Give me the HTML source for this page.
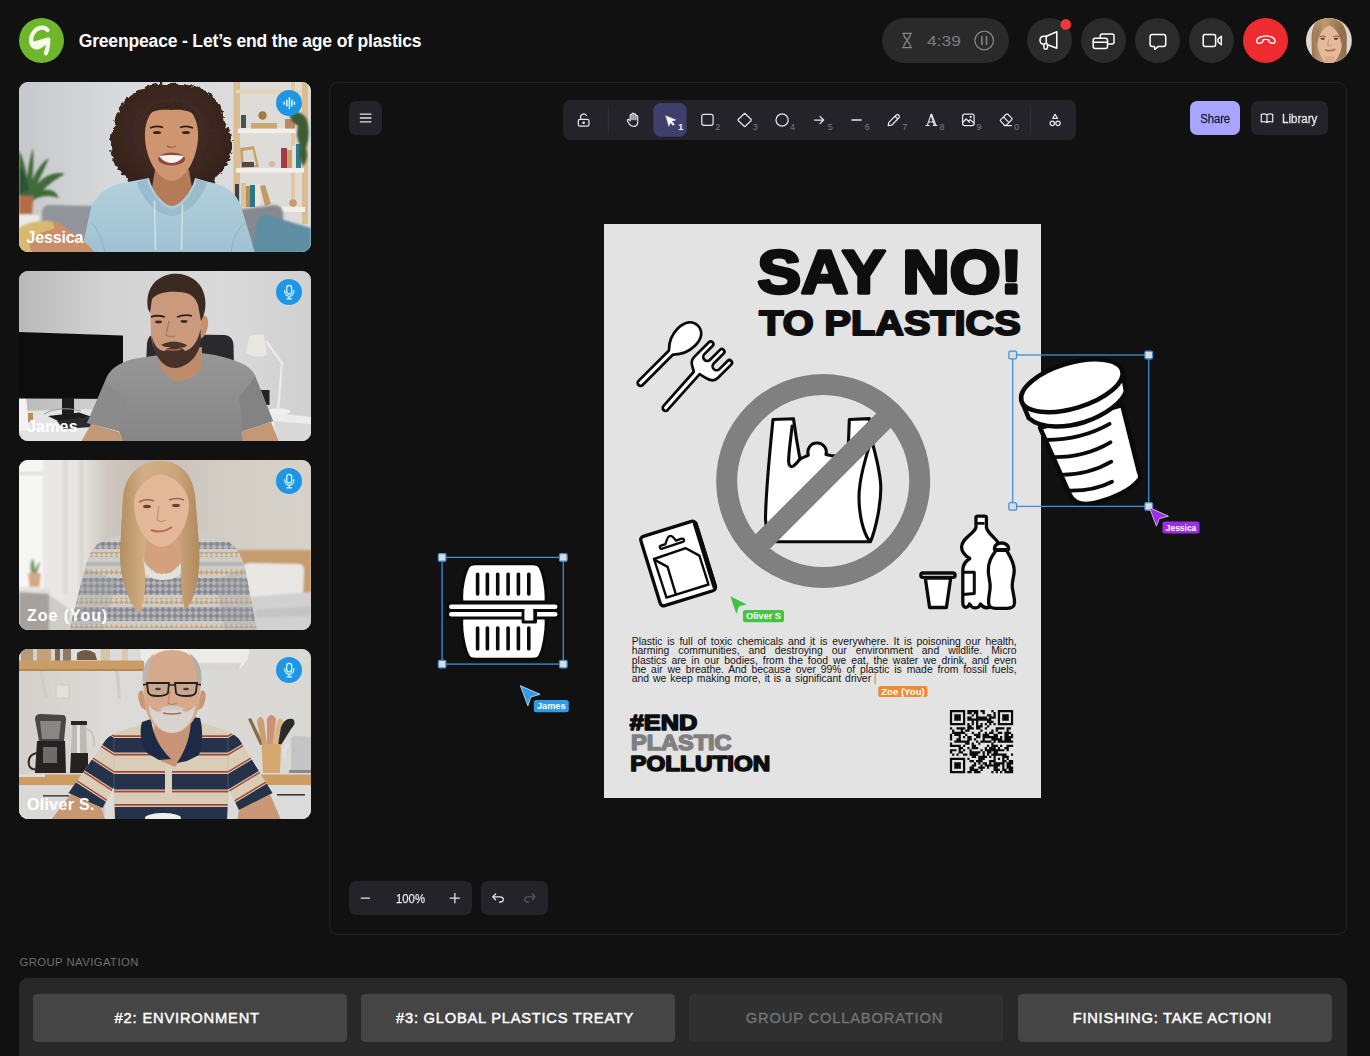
<!DOCTYPE html>
<html lang="en">
<head>
<meta charset="utf-8">
<title>Greenpeace - Let's end the age of plastics</title>
<style>
*{box-sizing:border-box;margin:0;padding:0}
html,body{width:1370px;height:1056px;overflow:hidden;background:#111111;font-family:"Liberation Sans",sans-serif;color:#fff}
.abs{position:absolute}
#root{position:relative;width:1370px;height:1056px;overflow:hidden;background:#111111}
/* header */
#logo{left:19px;top:18px;width:45px;height:45px;border-radius:50%;background:#6fb62c}
#title{left:78.700px;top:28.600px;font-weight:bold;font-size:17.500px;line-height:24px;white-space:nowrap;letter-spacing:-0.160px}
.cbtn{top:18px;width:45px;height:45px;border-radius:50%;background:#2b2b2b}
#timer{left:882px;top:18px;width:126.5px;height:45px;border-radius:23px;background:#2a2a2a}
/* tiles */
.tile{left:19px;width:291.5px;height:170.5px;border-radius:9px;overflow:hidden;background:#ccc}
.tile svg.ph{position:absolute;left:0;top:0;width:100%;height:100%;display:block}
.tile .nm{position:absolute;left:8px;bottom:5px;font-weight:bold;font-size:16px;color:#fff;letter-spacing:.2px}
.tile .mic{position:absolute;left:256.8px;top:8.2px;width:26.4px;height:26.4px;border-radius:50%;background:#1e96e6}
.tile .mic svg{display:block}
/* canvas */
#canvas{left:329px;top:81.5px;width:1018px;height:853px;border:1.3px solid #242424;border-radius:9px;background:#111111}
.ex{background:#232329;border-radius:7px}
#poster{left:604px;top:224px;width:437px;height:574px;background:#e3e3e3}
.jl{white-space:nowrap;text-align:justify;text-align-last:justify;height:9.3px}
/* bottom */
#gnl{left:19px;top:955px;font-size:11.5px;color:#6c6c6c;letter-spacing:.3px}
#gnp{left:18.800px;top:978px;width:1328.400px;height:90px;border-radius:8.500px;background:#282828}
.gb{top:994px;width:314px;height:48px;border-radius:4.500px;background:#454545;color:#fff;font-weight:bold;font-size:15px;text-align:center;line-height:48px;letter-spacing:.5px}
</style>
</head>
<body>
<div id="root">
<!-- HEADER -->
<div id="logo" class="abs"></div>
<div id="title" class="abs">Greenpeace - Let’s end the age of plastics</div>
<div id="timer" class="abs"></div>
<div class="abs cbtn" style="left:1027px"></div>
<div class="abs cbtn" style="left:1081px"></div>
<div class="abs cbtn" style="left:1135px"></div>
<div class="abs cbtn" style="left:1189px"></div>
<div class="abs cbtn" style="left:1243px;background:#ee2b2e"></div>
<div class="abs cbtn" id="avatar" style="left:1306.400px;top:17.700px;width:45.300px;height:45.300px;background:#c9a98c;overflow:hidden"><svg viewBox="0 0 45 45" width="45.300" height="45.300" style="display:block"><defs><clipPath id="avc"><circle cx="22.500" cy="22.500" r="22.500"/></clipPath><filter id="avb" x="-10%" y="-10%" width="120%" height="120%"><feGaussianBlur stdDeviation=".6"/></filter><linearGradient id="avh" x1="0" x2="1"><stop offset="0" stop-color="#9a7652"/><stop offset=".3" stop-color="#c19a70"/><stop offset=".55" stop-color="#b08a60"/><stop offset="1" stop-color="#8d6a49"/></linearGradient></defs><g clip-path="url(#avc)"><rect width="45" height="45" fill="#dcd8d2"/><g filter="url(#avb)"><path d="M22 0 C10 0 5.500 8 5.500 20 L6 46 L40 46 L40.500 20 C40.500 8 34 0 22 0Z" fill="url(#avh)"/><path d="M23.500 7 C15 7 10.500 13 10.800 22 C11 31 15 40 19 44 L23 46 L28 44 C32 40 36 31 36.200 22 C36.500 13 32 7 23.500 7Z" fill="#e4ba9a"/><path d="M19 46 L19 38 L28 38 L28 46Z" fill="#d9ab88"/><path d="M21 0.500 C14 3 9.500 10 10 20 L10.500 30 C12 20 14 12 23 7.500 C30 10 34.500 18 36 30 L36.500 20 C37 10 32 2.500 24 0.500Z" fill="url(#avh)"/><path d="M13.500 18.800 Q16.500 17.300 19.500 18.600 M27 18.500 Q30 17.200 33 18.600" stroke="#7a5a3e" stroke-width="1" fill="none"/><ellipse cx="16.600" cy="20.700" rx="2.200" ry="1" fill="#4f3c2f"/><ellipse cx="29.800" cy="20.600" rx="2.200" ry="1" fill="#4f3c2f"/><path d="M22.500 21 L21.500 27 Q23.500 28.300 25.500 27" stroke="#c4906f" stroke-width=".9" fill="none"/><path d="M19 31.500 Q24 34 29 30.800" stroke="#b4695c" stroke-width="1.500" fill="none"/></g></g></svg></div>
<svg class="abs" style="left:0;top:0" width="1370" height="80" viewBox="0 0 1370 80" fill="none" stroke-linecap="round" stroke-linejoin="round">
<!-- logo G -->
<path d="M47.400 30 C44 25.800 36.800 27.200 33.200 33 C29.400 39.300 30.800 46.600 36 47.300 C40 47.800 43.800 44 46.500 40.300 M34.800 43.300 C38.800 42.500 44 40.800 48.300 39.500 C48.200 44 47.500 49.300 45.900 53.300" stroke="#f6fcec" stroke-width="4.200"/>
<!-- timer -->
<g stroke="#858585" stroke-width="1.300">
<path d="M902.600 33.300 H911.600 M902.600 47.600 H911.600 M903.600 33.300 C903.600 38.500 907.100 39 907.100 40.400 C907.100 41.800 903.600 42.500 903.600 47.600 M910.600 33.300 C910.600 38.500 907.100 39 907.100 40.400 C907.100 41.800 910.600 42.500 910.600 47.600"/>
<circle cx="984.200" cy="40.500" r="9.300"/>
<path d="M981.900 36.500 V44.500 M986.500 36.500 V44.500" stroke-width="1.600"/>
</g>
<!-- megaphone -->
<g stroke="#fff" stroke-width="1.500">
<path d="M1046.300 36.300 L1056.800 31.800 V48.300 L1046.300 44.200 H1044 C1041.500 44.200 1040 42.500 1040 40.200 C1040 38 1041.500 36.300 1044 36.300Z"/>
<path d="M1046.300 36.300 V44.200"/>
<rect x="1043.900" y="43.500" width="3.600" height="5.800" rx="1.700" fill="#2a2a2a"/>
</g>
<circle cx="1065.800" cy="24.400" r="5.300" fill="#f23838"/>
<!-- cards -->
<g stroke="#fff" stroke-width="1.500">
<path d="M1100.300 37.500 V36 C1100.300 34.800 1101.200 34 1102.300 34 H1112 C1113.200 34 1114 34.800 1114 36 V42.100 C1114 43.300 1113.200 44.100 1112 44.100 H1108.500"/>
<rect x="1093.200" y="38.300" width="14.300" height="10.300" rx="2"/>
<path d="M1093.200 42.300 H1107.500"/>
</g>
<!-- chat -->
<path d="M1152.300 34.600 H1163.500 C1164.800 34.600 1165.700 35.500 1165.700 36.800 V44.200 C1165.700 45.500 1164.800 46.400 1163.500 46.400 H1158.300 L1154.800 49.300 L1154.300 46.400 H1152.300 C1151 46.400 1150.100 45.500 1150.100 44.200 V36.800 C1150.100 35.500 1151 34.600 1152.300 34.600Z" stroke="#fff" stroke-width="1.500"/>
<!-- video -->
<g stroke="#fff" stroke-width="1.500"><rect x="1203.200" y="34.600" width="12.400" height="11.800" rx="2"/><path d="M1221.300 36.300 L1218 39 V42 L1221.300 44.700Z"/></g>
<!-- phone -->
<path d="M1256.800 41.600 C1256.300 39.500 1257.500 38.300 1259.200 37.500 C1263.200 35.600 1268.600 35.600 1272.600 37.500 C1274.300 38.300 1275.500 39.500 1275 41.600 C1274.700 43 1273.700 43.600 1272.500 43.300 L1270.300 42.700 C1269.300 42.400 1268.800 41.700 1268.800 40.700 V39.900 C1267 39.300 1264.800 39.300 1263 39.900 V40.700 C1263 41.700 1262.500 42.400 1261.500 42.700 L1259.300 43.300 C1258.100 43.600 1257.100 43 1256.800 41.600Z" stroke="#fff" stroke-width="1.400"/>
<text x="927" y="46" font-family="'Liberation Sans',sans-serif" font-size="15.300" fill="#7d7d7d" stroke="none" textLength="33.800" lengthAdjust="spacingAndGlyphs">4:39</text>
</svg>

<!-- TILES -->
<div class="abs tile" id="t1" style="top:81.5px"><svg class="ph" viewBox="0 0 291.5 170.5" preserveAspectRatio="none">
<defs>
<filter id="b1" x="-10%" y="-10%" width="120%" height="120%"><feGaussianBlur stdDeviation="1"/></filter>
<filter id="b2" x="-10%" y="-10%" width="120%" height="120%"><feGaussianBlur stdDeviation="2.2"/></filter>
<filter id="curl" x="-10%" y="-10%" width="120%" height="120%"><feTurbulence type="fractalNoise" baseFrequency="0.22" numOctaves="2" seed="4" result="n"/><feDisplacementMap in="SourceGraphic" in2="n" scale="7" xChannelSelector="R" yChannelSelector="G"/><feGaussianBlur stdDeviation="0.5"/></filter>
<filter id="b05" x="-10%" y="-10%" width="120%" height="120%"><feGaussianBlur stdDeviation="0.5"/></filter>
<linearGradient id="jw" x1="0" x2="1"><stop offset="0" stop-color="#c6c8cb"/><stop offset=".35" stop-color="#d9dadc"/><stop offset="1" stop-color="#dcdcdc"/></linearGradient>
<radialGradient id="jh" cx=".5" cy=".45" r=".6"><stop offset="0" stop-color="#4a3128"/><stop offset="1" stop-color="#33211b"/></radialGradient>
<linearGradient id="jhd" x1="0" x2="0" y1="0" y2="1"><stop offset="0" stop-color="#b3d1de"/><stop offset="1" stop-color="#9fc1d1"/></linearGradient>
</defs>
<rect width="291.5" height="170.5" fill="url(#jw)"/>
<!-- shelf -->
<g filter="url(#b05)">
<rect x="213" y="0" width="78" height="140" fill="#dedcd8"/>
<rect x="214.5" y="0" width="6.5" height="128" fill="#dcbd93"/>
<rect x="283" y="0" width="6" height="142" fill="#dcbd93"/>
<rect x="272" y="0" width="4" height="128" fill="#e3c7a0"/>
<rect x="219" y="46.5" width="66" height="4.6" fill="#f1efec"/>
<rect x="217" y="86" width="68" height="4.6" fill="#f1efec"/>
<rect x="262" y="125" width="24" height="5" fill="#f1efec"/>
<rect x="217" y="8" width="66" height="3.5" fill="#e6d3b5"/>
<!-- books mid shelf -->
<rect x="262" y="66" width="6" height="20" fill="#a43a44"/><rect x="268" y="68" width="5" height="18" fill="#c9a06c"/><rect x="273" y="64" width="4" height="22" fill="#e8e2d6"/><rect x="277" y="62" width="5" height="24" fill="#2b7f95"/>
<!-- frame -->
<path d="M221 66 L235 64 L240 85 L222 86Z" fill="#c9a06c"/><path d="M224 69 L233.5 67.5 L237 83 L224.5 83.5Z" fill="#dcdad6"/>
<rect x="223" y="80" width="12" height="5" fill="#5a4a3a"/>
<!-- top shelf items -->
<rect x="232" y="41" width="26" height="5.5" fill="#c9a774"/><circle cx="243.5" cy="33.5" r="4.2" fill="#a5793f"/><rect x="222" y="33" width="5" height="13" fill="#49524d"/>
<rect x="266" y="37" width="10" height="9.5" fill="#b98a5e"/>
<!-- books lower -->
<rect x="216" y="102" width="4" height="23" fill="#3d3f46"/><rect x="222" y="101" width="5" height="24" fill="#d9c19a"/><rect x="227" y="104" width="4" height="21" fill="#b98f58"/><rect x="231" y="103" width="5" height="22" fill="#2a7488"/><rect x="236" y="102" width="5" height="23" fill="#ece6da"/>
<path d="M241 104 L246 103 L252 122 L246 124Z" fill="#c49a63"/>
<circle cx="274" cy="121" r="3.8" fill="#c99c6e"/><circle cx="253" cy="82" r="3" fill="#d8b7a0"/>
</g>
<!-- plant right -->
<g filter="url(#b1)"><path d="M270 32 Q282 26 288 38 Q292 52 287 66 Q290 78 284 84 Q279 76 281 64 Q276 52 279 44 Q272 40 270 32Z" fill="#3d5a34"/></g>
<!-- plant left -->
<g filter="url(#b1)">
<path d="M0 68 Q6 80 8 96 Q10 78 14 66 Q15 84 13 98 Q22 80 30 76 Q24 90 18 102 Q32 88 46 92 Q34 98 24 108 Q36 106 40 116 Q28 112 18 116 L12 120 L0 120Z" fill="#3f6a3a"/>
<path d="M0 84 Q8 92 10 108 L0 112Z" fill="#2f5530"/>
<path d="M0 114 L14.5 114 L13 132 L0 132Z" fill="#b56c45"/>
<rect x="0" y="133" width="20" height="14" fill="#ecebe9"/>
</g>
<!-- sofa -->
<g filter="url(#b1)">
<path d="M23 131 Q23 123 31 123 L80 124 L80 171 L23 171Z" fill="#8f959b"/>
<path d="M215 128 L255 123 Q263 123 264 131 L266 171 L215 171Z" fill="#858a90"/>
<path d="M238 141 Q240 131 248 133 L292 146 L292 171 L232 171Z" fill="#5e8da2"/>
<path d="M0 146 Q10 138 30 139 Q42 141 44 152 L46 171 L0 171Z" fill="#d8b96f"/>
</g>
<!-- hair -->
<g filter="url(#curl)">
<path d="M152 2 C120 -1 98 18 96 44 C86 60 92 84 106 94 C110 104 120 108 128 102 L134 110 L172 110 L178 104 C186 108 196 104 198 94 C214 82 218 58 206 42 C204 16 184 0 152 2Z" fill="url(#jh)"/>
</g>
<!-- neck -->
<path d="M136 88 L170 88 L174 112 L153 128 L132 112Z" fill="#b57a58" filter="url(#b05)"/>
<!-- hoodie -->
<g filter="url(#b05)">
<path d="M109 100 C92 102 78 110 72 126 L62 171 L236 171 L222 124 C216 108 204 103 190 100 L176 96 C172 112 160 124 153 124 C146 124 134 112 130 96Z" fill="url(#jhd)"/>
<path d="M128 97 C132 114 146 127 153 127 C160 127 174 114 178 97 L188 100 C184 116 170 132 153 134 C136 132 122 116 118 100Z" fill="#9abccd"/>
<path d="M135.500 119 L136.500 168" stroke="#d4e6ee" stroke-width="1.3" fill="none"/><path d="M163.500 122 L162.500 168" stroke="#d4e6ee" stroke-width="1.3" fill="none"/>
<path d="M72 140 Q82 150 86 171" stroke="#8eb2c4" stroke-width="1" fill="none"/><path d="M226 140 Q214 152 212 171" stroke="#8eb2c4" stroke-width="1" fill="none"/>
</g>
<!-- face -->
<g filter="url(#b05)">
<path d="M152.500 22 C134 22 125 36 126 56 C127 76 138 98 152.500 99 C167 98 178 76 179 56 C180 36 171 22 152.500 22Z" fill="#cf9570"/>
<path d="M126 34 C132 20 146 18 152 22 C160 18 174 22 180 36 C172 28 162 27 152 28 C142 27 134 28 126 34Z" fill="#3b261f"/>
<ellipse cx="152.600" cy="77" rx="13.500" ry="6.500" fill="#8d4a3d"/>
<path d="M140 74 Q152.600 72 165 74 Q160 81 152.600 81 Q145 81 140 74Z" fill="#f7f4f0"/>
<path d="M131 46 Q137 43 144 45.500" stroke="#2c1b15" stroke-width="1.600" fill="none"/><path d="M161 45.500 Q168 43 174 46" stroke="#2c1b15" stroke-width="1.600" fill="none"/>
<ellipse cx="138" cy="50.500" rx="4" ry="1.500" fill="#3a241c"/><ellipse cx="167" cy="50.500" rx="4" ry="1.500" fill="#3a241c"/>
<path d="M148 64 Q152.600 67 157 64" stroke="#a8694c" stroke-width="1.500" fill="none"/>
</g>
<!-- hand -->
<g filter="url(#b05)"><path d="M12 158 C16 150 28 150 36 146 C32 140 36 137 42 142 C52 150 66 158 76 171 L14 171 C10 166 10 162 12 158Z" fill="#c98e6a"/></g>
</svg>
<div class="nm" style="letter-spacing:-.15px;left:7.500px">Jessica</div><div class="mic"><svg viewBox="0 0 26.4 26.4" width="26.4" height="26.4" fill="none" stroke="#e2fbff" stroke-width="1.500" stroke-linecap="butt"><path d="M8.100 11.700 V14.700 M10.800 9.800 V16.600 M13.400 7.500 V18.900 M15.900 9.800 V16.600 M18.400 11.700 V14.700"/></svg></div></div>
<div class="abs tile" id="t2" style="top:270.5px"><svg class="ph" viewBox="0 0 291.5 170.5" preserveAspectRatio="none">
<defs>
<linearGradient id="mw" x1="0" x2="1"><stop offset="0" stop-color="#b9b9b9"/><stop offset=".3" stop-color="#d2d2d2"/><stop offset=".7" stop-color="#dadada"/><stop offset="1" stop-color="#d0d0d0"/></linearGradient>
<linearGradient id="mts" x1="0" x2="0" y1="0" y2="1"><stop offset="0" stop-color="#979797"/><stop offset="1" stop-color="#868686"/></linearGradient>
</defs>
<rect width="291.5" height="170.5" fill="url(#mw)"/>
<g filter="url(#b05)">
<!-- desk left -->
<path d="M0 140 L75 138 L75 171 L0 171Z" fill="#e3e3e3"/>
<path d="M0 115 L6 112 L10 158 L0 160Z" fill="#f2f2f4"/>
<!-- monitor -->
<path d="M0 61 L104 64.500 L104 128 L0 127.500Z" fill="#0e0e10"/>
<rect x="43" y="127" width="12" height="18" fill="#1b1b1d"/>
<path d="M29 145 L60 141.500 L73 146 L40 150.500Z" fill="#1a1a1c"/>
<path d="M38 150 L72 146 L72 156 L44 158Z" fill="#2a2a2d"/>
<path d="M25 143 Q40 134 62 140" stroke="#9a9a9a" stroke-width="1" fill="none"/>
<rect x="9" y="142" width="5" height="9" fill="#b98d5a"/>
<!-- desk right -->
<path d="M246 141 L292 146 L292 171 L252 171Z" fill="#ececec"/>
<path d="M255 150 L292 153 L292 171 L258 171Z" fill="#d9d9d9"/>
<!-- chair -->
<path d="M128 72 Q129 63 138 63 L206 64 Q214 65 214.500 74 L215 96 L127 96Z" fill="#2c2c2e"/>
<!-- lamp -->
<path d="M230 66 Q236 62 245 64 L248 84 Q237 88 227 82Z" fill="#e9e7e2"/>
<path d="M247 70 L263 92 L259 140" stroke="#ecebe8" stroke-width="2.200" fill="none"/>
<ellipse cx="259.500" cy="140.500" rx="12" ry="3.200" fill="#f0efec"/>
<rect x="241.500" y="119" width="9" height="15" fill="#232325"/>
</g>
<!-- shirt -->
<g filter="url(#b05)">
<path d="M114 88 C100 92 90 98 86 110 L68 152 L100 160 L104 171 L226 171 L224 160 L254 150 L236 104 C230 92 212 88 196 84 L182 82 L140 84Z" fill="url(#mts)"/>
<path d="M86 112 L68 152 L100 160 L108 128Z" fill="#8b8b8b"/><path d="M236 106 L254 150 L224 160 L220 126Z" fill="#838383"/>
<!-- arms -->
<path d="M72 153 L100 161 L104 171 L62 171Z" fill="#c39876"/><path d="M222 161 L252 151 L260 171 L224 171Z" fill="#c39876"/>
<!-- neck -->
<path d="M140 80 L183 76 L183 96 C176 106 166 111 158 110 C150 109 143 100 140 92Z" fill="#be8c6b"/>
</g>
<!-- head -->
<g filter="url(#b05)">
<path d="M181 46 C186 42 190 46 189 54 C188 62 184 68 180 68Z" fill="#c4906f"/>
<path d="M131 30 C130 14 142 8 158 9 C174 10 183 20 183 36 L182 60 C182 78 170 95 156 96 C144 96 134 82 132 64Z" fill="#cb9a7b"/>
<!-- hair -->
<path d="M129 38 C126 18 136 6 152 3 C166 1 180 8 184 20 C188 30 187 42 182 50 L179 34 C176 24 168 21 160 21 C148 20 138 22 133 28 L131 42Z" fill="#3b2a23"/>
<!-- beard -->
<path d="M133 66 C136 76 140 80 146 80 C150 74 162 74 166 80 C174 78 179 70 181.500 58 L182 70 C180 84 170 96 156 97 C144 97 134 84 133 66Z" fill="#46332a"/>
<path d="M142 74 Q154 67 168 74 Q166 78 154 76 Q146 77 142 74Z" fill="#4a362c"/>
<path d="M147 78 Q154 80 162 78" stroke="#a06a58" stroke-width="1.500" fill="none"/>
<path d="M132 46 Q138 43.500 146 46" stroke="#2f211b" stroke-width="1.800" fill="none"/><path d="M158 46 Q166 43 173 45" stroke="#2f211b" stroke-width="1.800" fill="none"/>
<ellipse cx="139.500" cy="51" rx="3.500" ry="1.400" fill="#3d2b24"/><ellipse cx="165" cy="50.500" rx="3.500" ry="1.400" fill="#3d2b24"/>
<path d="M150 50 L147 64 Q151 67 156 65" stroke="#a87a5e" stroke-width="1.200" fill="none"/>
</g>
</svg>
<div class="nm">James</div><div class="mic"><svg viewBox="0 0 26.4 26.4" width="26.4" height="26.4" fill="none" stroke="#dcf9ff" stroke-width="1.25" stroke-linecap="round"><rect x="10.700" y="6.500" width="5" height="8.500" rx="2.500"/><path d="M8.600 11.600 C8.600 19.300 17.900 19.300 17.900 11.600 M13.200 17.500 V19.600 M10.900 19.800 H15.600"/></svg></div></div>
<div class="abs tile" id="t3" style="top:459.5px"><svg class="ph" viewBox="0 0 291.5 170.5" preserveAspectRatio="none">
<defs>
<linearGradient id="zw" x1="0" x2="1"><stop offset="0" stop-color="#efeeec"/><stop offset=".22" stop-color="#e6e4e1"/><stop offset=".3" stop-color="#cdc7bf"/><stop offset=".45" stop-color="#c5beb5"/><stop offset=".7" stop-color="#d3cdc5"/><stop offset="1" stop-color="#d6d1c9"/></linearGradient>
<linearGradient id="zh" x1="0" x2="1"><stop offset="0" stop-color="#b38e62"/><stop offset=".3" stop-color="#d1ae83"/><stop offset=".7" stop-color="#cba67a"/><stop offset="1" stop-color="#b08a5f"/></linearGradient>
<pattern id="zk" width="6" height="6" patternUnits="userSpaceOnUse"><rect width="6" height="6" fill="#858890"/><path d="M0 3 L3 0 L6 3 L3 6Z" fill="#b4b4b8"/></pattern>
<pattern id="zk2" width="5" height="5" patternUnits="userSpaceOnUse"><rect width="5" height="5" fill="#d3cfc8"/><path d="M0 2.500 L2.500 0 L5 2.500 L2.500 5Z" fill="#c4a77e"/></pattern>
<clipPath id="zsw"><path d="M92 78 C76 82 70 92 66 108 L50 171 L238 171 L226 108 C220 84 204 76 188 72 L176 70 L176 104 L112 104 L112 72Z"/></clipPath>
</defs>
<rect width="291.5" height="170.5" fill="url(#zw)"/>
<g filter="url(#b1)">
<!-- window -->
<rect x="0" y="0" width="24" height="130" fill="#f6f6f5"/><rect x="0" y="12" width="24" height="3" fill="#dcdbd9"/>
<rect x="24" y="0" width="8" height="130" fill="#e9e8e6"/>
<rect x="44" y="0" width="5" height="135" fill="#dddbd8"/><rect x="60" y="0" width="5" height="150" fill="#dad7d3"/>
<!-- sill -->
<path d="M0 129 L30 131 L30 171 L0 171Z" fill="#a5a19c"/><path d="M0 127 L32 129 L32 134 L0 132Z" fill="#e1dfdc"/>
<path d="M30 135 L52 150 L50 171 L30 171Z" fill="#cfccc8"/>
<!-- plant -->
<path d="M9 113 L22 113 L20.500 127 L10.500 127Z" fill="#d4a888"/><path d="M12 113 Q10 102 14 98 Q16 104 16 110 Q19 102 21 102 Q20 108 18 113Z" fill="#7c9a62"/>
<!-- headboard / pillow / bed -->
<rect x="217" y="90" width="75" height="44" fill="#c69c6e"/>
<path d="M224 108 Q224 103 232 103 L280 104 Q286 105 285 112 L284 136 L226 137Z" fill="#e9e7e4"/>
<path d="M230 137 L292 132 L292 171 L240 171Z" fill="#d2d1d1"/>
<path d="M236 150 L292 146 L292 156 L238 158Z" fill="#c4c3c5"/>
</g>
<!-- hair back -->
<g filter="url(#b05)">
<path d="M140 1 C118 2 105 18 104 40 L101 90 C100 120 112 146 122 154 L132 120 L158 120 L168 150 C178 138 182 110 180 84 L176 36 C174 14 160 0 140 1Z" fill="url(#zh)"/>
</g>
<!-- sweater -->
<g filter="url(#b05)">
<g clip-path="url(#zsw)">
<rect x="40" y="66" width="210" height="110" fill="#cfccc7"/>
<rect x="40" y="82" width="210" height="7" fill="url(#zk)"/>
<rect x="40" y="92" width="210" height="5" fill="url(#zk2)"/>
<rect x="40" y="102" width="210" height="4" fill="#b9b8b8"/>
<rect x="40" y="109" width="210" height="6" fill="url(#zk2)"/>
<rect x="40" y="118" width="210" height="17" fill="url(#zk)"/>
<rect x="40" y="138" width="210" height="6" fill="url(#zk2)"/>
<rect x="40" y="147" width="210" height="14" fill="url(#zk)"/>
<rect x="40" y="164" width="210" height="4" fill="url(#zk2)"/>
<path d="M66 108 L50 171 L84 171 L98 120Z" fill="#9fa0a4" opacity=".35"/>
<path d="M226 108 L238 171 L206 171 L196 120Z" fill="#9fa0a4" opacity=".3"/>
</g>
<path d="M124 98 C128 110 136 114 144 114 C152 114 160 110 164 98 L168 104 C164 116 154 120 144 120 C134 120 124 116 120 104Z" fill="#e4e1dc"/>
</g>
<!-- neck + face -->
<g filter="url(#b05)">
<path d="M128 78 L160 78 L163 100 C158 110 150 113 144 113 C138 113 130 110 125 100Z" fill="#d3a17e"/>
<path d="M142.500 12 C124 12 114 26 115 46 C116 66 128 86 142.500 87 C157 86 169 66 170 46 C171 26 161 12 142.500 12Z" fill="#e3b898"/>
<!-- hair front -->
<path d="M140 1 C118 2 105 18 104 40 L101 90 C100 118 110 142 120 154 C128 140 128 110 122 86 C114 70 112 50 116 36 C122 22 132 16 140 14 C152 16 164 22 169 38 C172 56 170 72 164 86 C160 110 162 136 166 150 C178 138 182 110 180 84 L176 36 C174 14 160 0 140 1Z" fill="url(#zh)"/>
<path d="M120 42 Q127 38 135 41" stroke="#8d6a48" stroke-width="1.500" fill="none"/><path d="M150 40 Q158 37 165 40" stroke="#8d6a48" stroke-width="1.500" fill="none"/>
<ellipse cx="128" cy="46.500" rx="4" ry="1.700" fill="#5b4636"/><ellipse cx="157" cy="45.500" rx="4" ry="1.700" fill="#5b4636"/>
<path d="M140 46 L138 60 Q142 63 147 60" stroke="#c4916f" stroke-width="1.200" fill="none"/>
<path d="M132 70 Q143 74 153 67" stroke="#b46a5c" stroke-width="2" fill="none"/>
</g>
</svg>
<div class="nm" style="letter-spacing:.95px">Zoe (You)</div><div class="mic"><svg viewBox="0 0 26.4 26.4" width="26.4" height="26.4" fill="none" stroke="#dcf9ff" stroke-width="1.25" stroke-linecap="round"><rect x="10.700" y="6.500" width="5" height="8.500" rx="2.500"/><path d="M8.600 11.600 C8.600 19.300 17.900 19.300 17.900 11.600 M13.200 17.500 V19.600 M10.900 19.800 H15.600"/></svg></div></div>
<div class="abs tile" id="t4" style="top:648.5px"><svg class="ph" viewBox="0 0 291.5 170.5" preserveAspectRatio="none">
<defs>
<linearGradient id="ow" x1="0" x2="1"><stop offset="0" stop-color="#d3d0cb"/><stop offset=".3" stop-color="#dddbd7"/><stop offset="1" stop-color="#dad8d4"/></linearGradient>
<clipPath id="obody"><rect x="95" y="60" width="114" height="120"/></clipPath><clipPath id="oleft"><rect x="30" y="60" width="65" height="120"/></clipPath><clipPath id="oright"><rect x="209" y="60" width="65" height="120"/></clipPath>
<g id="ostr"><rect x="-100" y="89" width="500" height="14.5" fill="#253049"/><rect x="-100" y="125" width="500" height="15.5" fill="#253049"/><rect x="-100" y="158" width="500" height="16" fill="#253049"/><rect x="-100" y="86.300" width="500" height="1.700" fill="#a34432"/><rect x="-100" y="104.800" width="500" height="1.700" fill="#a34432"/><rect x="-100" y="122" width="500" height="1.700" fill="#a34432"/><rect x="-100" y="141.700" width="500" height="1.700" fill="#a34432"/><rect x="-100" y="155" width="500" height="1.700" fill="#a34432"/></g>
<clipPath id="osh"><path d="M116 78 C100 81 90 86 86 92 L49.500 144 L83.500 159 L95 138 L96 171 L208 171 L209.500 140 L220 161 L253.500 144 L220 90 C214 84 204 80 190 76 L176 72 L130 72Z"/></clipPath>
</defs>
<rect width="291.5" height="170.5" fill="url(#ow)"/>
<g filter="url(#b05)">
<!-- shelf + items -->
<rect x="2" y="0" width="12" height="12" fill="#b99a78"/><rect x="18" y="0" width="14" height="12" fill="#c2a17a"/><rect x="36" y="0" width="5" height="12" fill="#7a6654"/><rect x="44" y="0" width="8" height="12" fill="#8d7a68"/><rect x="52" y="0" width="28" height="12" fill="#e2dfdb"/><path d="M58 4 Q66 -2 76 4 L78 11 L58 11Z" fill="#6d5a4b"/><rect x="82" y="0" width="9" height="12" fill="#d8c3a4"/><rect x="103" y="0" width="6" height="12" fill="#d9c9b2"/>
<rect x="0" y="11.500" width="125" height="10" fill="#cb9d66"/><rect x="0" y="20" width="125" height="2" fill="#b58853"/>
<path d="M20 22 L24 22 L29 50 L26 50Z" fill="#cfccc8"/><path d="M96 22 L100 22 L102 50 L99 50Z" fill="#cfccc8"/>
<rect x="37" y="36" width="13" height="13" fill="#e3e1dd" stroke="#cfccc8" stroke-width="1"/>
<!-- hood -->
<path d="M121 0 L230 0 L229 10 L220 21 L136 21 L122 10Z" fill="#ecebe8"/><path d="M136 14 L222 14 L220 21 L136 21Z" fill="#d8d6d2"/>
<!-- coffee machine -->
<path d="M16 70 Q16 65 22 65 L44 66 Q47 66 47 71 L45 92 L20 92Z" fill="#4a4644"/><path d="M21 72 L42 72 L40 90 L23 90Z" fill="#8b8683"/>
<path d="M18 92 L46 92 L47 124 L16 124Z" fill="#252322"/><path d="M24 98 L38 98 L38 114 L24 114Z" fill="#6f6b68"/>
<path d="M18 104 Q8 106 10 116 Q12 122 20 120" stroke="#2a2726" stroke-width="2" fill="none"/>
<rect x="52" y="72" width="16" height="4" fill="#2b2827"/><path d="M53 76 L67 76 L68 104 L52 104Z" fill="#bdb9b5"/><rect x="58" y="76" width="3" height="28" fill="#e6e4e1"/><path d="M52 104 L69 104 L69 124 L51 124Z" fill="#272423"/>
<path d="M68 80 Q76 82 75 98" stroke="#c3bfbb" stroke-width="1.500" fill="none"/>
<!-- counter + cabinets -->
<rect x="0" y="125.500" width="62" height="11" fill="#cc9c63"/><rect x="0" y="136" width="62" height="35" fill="#d9d9d7"/><rect x="0" y="125" width="26" height="3" fill="#dddcda"/>
<rect x="24" y="146" width="26" height="1.600" fill="#4a4846"/><rect x="84" y="150" width="1.500" height="21" fill="#bfbebb"/>
<rect x="240" y="125.500" width="52" height="10.500" fill="#cc9c63"/><rect x="214" y="136" width="78" height="35" fill="#dbdbd9"/><rect x="258" y="145" width="28" height="1.600" fill="#3a3836"/><rect x="219" y="150" width="1.500" height="21" fill="#bfbebb"/>
<!-- utensils -->
<path d="M229 70 L232 69 L245 96 L241 96Z" fill="#8a6a48"/><path d="M238 72 Q241 64 245 72 L248 96 L243 96Z" fill="#c9a06e"/><path d="M248 70 Q252 62 257 70 L254 96 L248 96Z" fill="#d48f78"/><path d="M258 72 Q262 66 265 74 L258 96 L254 96Z" fill="#d9b585"/>
<path d="M262 78 Q266 68 274 70 Q278 74 272 80 L262 96 L259 96Z" fill="#2c2a29"/>
<path d="M242.500 95 L262 95 L261 124 L244 124Z" fill="#d4a66f"/>
<!-- kettle -->
<path d="M272 90 Q272 87 276 87 L292 88 L292 123 L272 123Z" fill="#c4c4c4"/><path d="M270 96 Q264 98 266 108" stroke="#e4e4e4" stroke-width="2.500" fill="none"/><rect x="270" y="121" width="22" height="3" fill="#8a8a8a"/>
</g>
<!-- arms -->
<g filter="url(#b05)">
<path d="M52 145 L82 158 L86 171 L32 171Z" fill="#c99773"/><path d="M221 160 L251 145 L262 171 L218 171Z" fill="#c99773"/>
</g>
<!-- shirt -->
<g filter="url(#b05)">
<g clip-path="url(#osh)">
<rect x="40" y="66" width="220" height="110" fill="#d9cdb8"/>
<g clip-path="url(#obody)"><use href="#ostr"/></g>
<g clip-path="url(#oleft)"><use href="#ostr" transform="translate(95 0) skewY(33) translate(-95 0)"/></g>
<g clip-path="url(#oright)"><use href="#ostr" transform="translate(209 0) skewY(-31) translate(-209 0)"/></g>
<path d="M95 88 L95 171" stroke="#b9ad99" stroke-width=".8" opacity=".35"/><path d="M209 88 L209 171" stroke="#b9ad99" stroke-width=".8" opacity=".35"/>
<path d="M146 110 L153 110 L153 146 L146 146Z" fill="#ddd1bd"/>
</g>
<!-- neck -->
<path d="M136 74 L172 72 L174 96 L156 118 L142 112 L132 96Z" fill="#c99475"/>
<!-- collar -->
<path d="M123 73 L132 70 C134 88 142 100 152 110 L140 111 L128 104 C122 94 120 82 123 73Z" fill="#1f2a45"/>
<path d="M181 69 L172 68 C172 88 166 102 158 114 L168 112 L180 106 C184 94 184 80 181 69Z" fill="#1f2a45"/>
</g>
<!-- head -->
<g filter="url(#b05)">
<path d="M124 42 C120 40 118 46 120 52 C122 60 126 62 128 60Z" fill="#c99678"/><path d="M182 42 C186 40 188 46 186 52 C184 60 180 62 178 60Z" fill="#c99678"/>
<path d="M153 1 C134 1 124 14 124 32 L126 56 C128 72 140 84 153 84 C166 84 178 72 180 56 L182 32 C182 14 172 1 153 1Z" fill="#d6a98c"/>
<path d="M124 36 C122 22 126 10 136 4 C130 12 128 24 128 36Z" fill="#bdb7b0"/><path d="M182 36 C184 22 180 10 170 4 C176 12 178 24 178 36Z" fill="#b3aca5"/>
<!-- beard -->
<path d="M130 56 C134 62 138 64 142 62 C146 56 160 56 164 62 C168 64 172 62 176 56 C176 70 166 84 153 84 C140 84 130 70 130 56Z" fill="#d9d4cd"/>
<path d="M140 60 Q153 53 166 60 Q160 62 153 61 Q146 62 140 60Z" fill="#cfcac3"/>
<path d="M144 64 Q153 66 162 64" stroke="#a66f60" stroke-width="1.500" fill="none"/>
<!-- glasses -->
<path d="M128 34 L150 34 L149 44 Q147 47 138 47 Q130 47 129 43Z" fill="#c9a690" stroke="#24211f" stroke-width="1.800"/>
<path d="M156 34 L178 34 L177 43 Q176 47 168 47 Q158 47 157 44Z" fill="#c9a690" stroke="#24211f" stroke-width="1.800"/>
<path d="M150 36 L156 36" stroke="#24211f" stroke-width="1.500"/><path d="M128 35 L124 36" stroke="#24211f" stroke-width="1.500"/><path d="M178 35 L182 36" stroke="#24211f" stroke-width="1.500"/>
<ellipse cx="139" cy="40" rx="3" ry="1.300" fill="#4a3a32"/><ellipse cx="167" cy="40" rx="3" ry="1.300" fill="#4a3a32"/>
<path d="M151 42 L149 54 Q153 57 158 54" stroke="#b98667" stroke-width="1.200" fill="none"/>
</g>
<!-- cup -->
<ellipse cx="144" cy="169" rx="18" ry="5" fill="#f1efec"/>
</svg>
<div class="nm" style="letter-spacing:.3px">Oliver S.</div><div class="mic"><svg viewBox="0 0 26.4 26.4" width="26.4" height="26.4" fill="none" stroke="#dcf9ff" stroke-width="1.25" stroke-linecap="round"><rect x="10.700" y="6.500" width="5" height="8.500" rx="2.500"/><path d="M8.600 11.600 C8.600 19.300 17.900 19.300 17.900 11.600 M13.200 17.500 V19.600 M10.900 19.800 H15.600"/></svg></div></div>
<!-- CANVAS -->
<div id="canvas" class="abs"></div>
<div class="abs ex" id="menu" style="left:348.5px;top:100.5px;width:33.5px;height:34.5px"></div>
<div class="abs ex" id="toolbar" style="left:563px;top:99.5px;width:512.5px;height:40px"></div>
<div class="abs" id="share" style="left:1189.5px;top:101px;width:50.5px;height:33.5px;border-radius:7px;background:#a8a5ff;color:#1c1c28;font-size:12.3px;line-height:37px;text-align:center;letter-spacing:-.1px;-webkit-text-stroke:.3px #1c1c28"><span style="display:inline-block;transform:scaleX(.92)">Share</span></div>
<div class="abs ex" id="library" style="left:1250.5px;top:101px;width:77px;height:33.5px"><span style="position:absolute;left:31px;top:0;line-height:37px;font-size:12.300px;color:#e3e3e8;display:inline-block;transform:scaleX(.94);transform-origin:left;-webkit-text-stroke:.3px #e3e3e8">Library</span></div>
<svg class="abs" style="left:0;top:0" width="1370" height="160" viewBox="0 0 1370 160" fill="none" stroke="#e3e3e8" stroke-width="1.250" stroke-linecap="round" stroke-linejoin="round">
<!-- hamburger -->
<path d="M360.300 114.200 H371 M360.300 118 H371 M360.300 121.800 H371" stroke-width="1.300"/>
<!-- lock -->
<rect x="578.300" y="119.300" width="10.700" height="6.800" rx="1.700"/><path d="M580.600 119.300 V116.800 C580.600 113.800 585 113 586.300 115.500"/><circle cx="583.650" cy="122.700" r=".7" fill="#e3e3e8"/>
<path d="M608.300 107.800 V131.500" stroke="#34343c" stroke-width="1"/>
<path d="M1030.600 107.800 V131.500" stroke="#34343c" stroke-width="1"/>
<!-- hand -->
<path d="M630.200 120.800 V115.300 C630.200 114 632 114 632 115.300 V119.500 V114.200 C632 112.900 633.900 112.900 633.900 114.200 V119.500 V114.800 C633.900 113.500 635.800 113.500 635.800 114.800 V119.800 V116.500 C635.800 115.200 637.700 115.200 637.700 116.500 V122 C637.700 124.800 636 126.400 633.600 126.400 C631.300 126.400 630.300 125.500 629.200 123.800 L627.500 121 C626.800 119.800 628.300 118.800 629.200 119.800Z"/>
<!-- selected -->
<rect x="653.300" y="103" width="33.400" height="33.800" rx="7.500" fill="#403e6a" stroke="none"/>
<path d="M666 115.900 L675.800 119.900 L671.600 121.300 L674.400 124.200 L673.100 125.400 L670.300 122.500 L669 125.900Z" fill="#fff" stroke="#fff" stroke-width=".5"/>
<!-- rect -->
<rect x="701.800" y="114.300" width="11.300" height="11" rx="2"/>
<!-- diamond -->
<path d="M744.700 113.300 L751 119.300 C751.400 119.700 751.400 120.300 751 120.700 L744.700 126.700 L738.400 120.700 C738 120.300 738 119.700 738.400 119.300Z"/>
<!-- circle -->
<circle cx="782.100" cy="120" r="6.100"/>
<!-- arrow -->
<path d="M814.500 120 H823.600 M820 116.400 L823.600 120 L820 123.600"/>
<!-- line -->
<path d="M852 120 H861.200" stroke-width="1.500"/>
<!-- pencil -->
<path d="M888.200 125.600 L888.800 122.400 L896 115.200 C896.800 114.400 898 114.400 898.800 115.200 C899.600 116 899.600 117.200 898.800 118 L891.600 125.200Z M895 116.300 L897.800 119.100"/>
<!-- text A -->
<path d="M926 125.500 H929.300 M933.300 125.500 H937 M927.300 125.500 L931 114.400 H931.800 L936 125.500 M930.700 114.400 L934.500 125.500 M928.800 122 H934.600" stroke-width="1.100"/>
<!-- image -->
<rect x="962.600" y="114" width="11.500" height="11.500" rx="2"/><path d="M962.800 122.300 L966.200 119 L969.500 122.300 M968.300 121.300 L970.200 119.600 L974 123"/><circle cx="970.700" cy="116.900" r=".5" fill="#e3e3e8"/>
<!-- eraser -->
<path d="M1004.800 125.400 L1000.700 121.300 C1000.200 120.800 1000.200 120.100 1000.700 119.600 L1006.200 114.300 C1006.700 113.800 1007.400 113.800 1007.900 114.300 L1011.700 118.100 C1012.200 118.600 1012.200 119.300 1011.700 119.800 L1006.200 125.400 Z M1004 125.500 H1011.500 M1003.500 117 L1008.800 122.400"/>
<!-- shapes -->
<path d="M1055.100 114.200 L1057.500 118.300 H1052.700Z"/><circle cx="1052.300" cy="123.300" r="2.200"/><circle cx="1058" cy="123.300" r="2.200"/>
<!-- digits -->
<g font-family="'Liberation Sans',sans-serif" font-size="9" fill="#7c7c85" stroke="none" text-anchor="middle">
<text x="680.800" y="130" fill="#fff" font-weight="bold">1</text><text x="717.800" y="130">2</text><text x="755.200" y="130">3</text><text x="792.600" y="130">4</text><text x="830.200" y="130">5</text><text x="867.200" y="130">6</text><text x="904.700" y="130">7</text><text x="942" y="130">8</text><text x="979" y="130">9</text><text x="1016.500" y="130">0</text>
</g>
<!-- library icon -->
<path d="M1261.300 114.300 C1263 113.600 1265.300 113.600 1267 114.800 C1268.700 113.600 1271 113.600 1272.700 114.300 V122 C1271 121.400 1268.700 121.400 1267 122.500 C1265.300 121.400 1263 121.400 1261.300 122Z M1267 114.800 V122.500" stroke-width="1.250"/>
</svg>

<div id="poster" class="abs"></div>
<svg id="cv" class="abs" style="left:0;top:0" width="1370" height="1056" viewBox="0 0 1370 1056">
<g stroke-linejoin="round" stroke-linecap="round">
<!-- ===== bag ===== -->
<g fill="#fff" stroke="#0a0a0a" stroke-width="3.100">
<path d="M773 419.500 L793.500 418.800 C795 430 797.500 446 800 459 C803 457.500 806 456.500 808.300 455.200 C806.500 449 810.500 443 817 443 C823.500 443 827.500 449 826 454.500 C828 455 829.500 455.300 831 455.600 L848 456 L849.300 419.500 L869.300 418.600 C870 428 871.500 437 872.700 444 C877 460 880.800 475 880.800 488 C880.800 505 876 528 870.500 541.800 L775 541.800 C768 535 765.500 527 765.500 519 C765.800 490 770 450 773 419.500Z"/>
<path d="M871.500 440 C866 455 859 480 859 497 C859 515 863 532 869.500 541" fill="none"/>
<path d="M792.200 426 C790.500 440 788.800 452 788.600 461 C788.600 466 791 467.500 793.500 466 C796 464 798.500 461 800 459" fill="none"/>
<path d="M848.900 440 L848.200 456" fill="none"/>
</g>
<!-- prohibition -->
<circle cx="823.200" cy="481" r="96.500" fill="none" stroke="#808080" stroke-width="21"/>
<path d="M755 549.200 L891.400 412.800" stroke="#808080" stroke-width="20.500" stroke-linecap="butt" fill="none"/>
<!-- ===== spoon & fork ===== -->
<g fill="#fff" stroke="#0a0a0a" stroke-width="2.700">
<path transform="translate(640.600 382.900) rotate(-45)" d="M0 -2.900 L43 -2.900 C46 -6 52 -12.200 65 -12.200 C75.500 -12.200 81 -7 81 0 C81 7 75.500 12.200 65 12.200 C52 12.200 46 6 43 2.900 L0 2.900 A2.900 2.900 0 0 1 0 -2.900Z"/>
<path transform="translate(665.600 407.900) rotate(-45)" d="M0 -2.900 L45.500 -5.600 C48.500 -10 49.500 -15.800 56 -15.800 L77 -15.800 A2.600 2.600 0 0 1 77 -10.600 L65.500 -10.600 A4 4 0 0 0 65.500 -2.600 L79.500 -2.600 A2.600 2.600 0 0 1 79.500 2.600 L65.500 2.600 A4 4 0 0 0 65.500 10.600 L77 10.600 A2.600 2.600 0 0 1 77 15.800 L58 15.800 C50 15.800 49.500 6 48 0.200 L0 2.900 A2.900 2.900 0 0 1 0 -2.900Z"/>
</g>
<!-- ===== blister pack ===== -->
<g fill="#fff" stroke="#0a0a0a">
<g transform="translate(639.800 537.400) rotate(-17.200)"><rect x="0" y="0" width="57.700" height="72.600" rx="3.600" stroke-width="3.300"/><path d="M57 3.500 V69" stroke-width="4.800" fill="none"/></g>
<path d="M661 545.600 L665.500 544.100 C666.500 540 668 535.800 670.300 535.800 C672.500 535.800 674.500 538.500 676 540.600 L681.600 538.700 C684 538 685 541 682.800 541.900 L662.200 548.700 C659.800 549.400 658.800 546.400 661 545.600Z" stroke-width="2.300"/>
<path d="M654 559 L685.800 548.200 L699.400 555.600 L708.500 584.500 L666.500 597.600Z" stroke-width="2.400"/>
<path d="M655.100 560.100 L667.600 566.900 L675.600 593.600" stroke-width="2.400" fill="none"/>
</g>
<!-- ===== small cup + bottles ===== -->
<g fill="#fff" stroke="#0a0a0a" stroke-width="3.300">
<path d="M925.300 578 L929.600 607.500 L946.400 607.500 L950.700 578Z"/>
<rect x="920.800" y="573" width="34.300" height="4.400" rx="2.200"/>
<path d="M976 517.500 C976 516.300 977 516.200 978 516.200 L984.500 516.200 C985.500 516.200 986.400 516.300 986.400 517.500 L986.400 527.500 C988 534 996 538 999 544 L1000 575 L992 606 C988 608.500 984 609 980.500 604 C978.500 609 972.500 609.500 969.500 604 C967.500 609 962.800 608 962.800 603 L962.800 570 C962.800 565 965 561.500 969.800 558.500 C965 555.500 961.600 552 961.600 547 C961.800 538 974 534 976 527.500Z"/>
<path d="M977.800 523.400 L983.400 523.400" fill="none" stroke-width="2.600"/>
<path d="M963.500 572.300 L974.300 572.300 L974.300 593.600 L963.500 594.400" fill="none" stroke-width="3"/>
<path d="M996 550.300 C992 556 987.700 562 988.300 572 C988.700 578 990.600 582 990.100 588 C989.700 594 988.100 598 988.600 603 C989 607.800 992 608.300 996 608.300 L1007 608.300 C1012 608.300 1014.300 607.300 1014.500 603 C1014.900 597 1012.400 592 1012.200 586 C1012 580 1014.400 576 1014.200 570 C1014 562 1010 556 1006.500 550.300Z"/>
<path d="M994.500 549.600 C993.500 540.800 1009.500 540.800 1008.500 549.600Z"/>
</g>
<!-- ===== tilted cup ===== -->
<g transform="translate(1071 386) rotate(-16.800)" fill="#fff" stroke="#0a0a0a" stroke-width="4.500">
<path d="M-41.700 31 L-32.500 104 C-31 114 -22 118.500 -8 119 C8 119.500 28 117 38.500 109 C41 107 40.500 104 40.200 102 L43.500 33Z"/>
<path d="M-51.700 0 L-49.700 18.500 C-40 34 -15 38.500 2 38.500 C25 38 45 30 51 21 L53.500 0Z"/>
<ellipse cx="0.900" cy="0" rx="52.600" ry="22.500"/>
<g fill="none" stroke-width="3.800"><path d="M-39.500 44.500 Q-5 54.500 26 47.400"/><path d="M-39 62.500 Q-8 72.500 21.500 65.300"/><path d="M-37.500 81.500 Q-10 90.500 16.700 84.100"/><path d="M-35.300 98.500 Q-10 107.500 11.600 103.500"/></g>
</g>
<!-- ===== clamshell ===== -->
<g fill="#fff" stroke="#0a0a0a" stroke-width="3">
<path d="M462 602 C460.500 590 464.500 573.500 467.500 568 C468.700 564.600 471 563.800 476 563.800 L532 563.800 C537 563.800 539.300 564.600 540.500 568 C543.500 573.500 547 590 546 602Z"/>
<path d="M462 618 C460.500 630 464.500 648.500 467.500 654.500 C468.700 658.400 471 659.300 476 659.300 L532 659.300 C537 659.300 539.300 658.400 540.500 654.500 C543.500 648.500 547 630 546 618Z"/>
<rect x="446.500" y="602" width="113.500" height="17" rx="4" fill="#0a0a0a" stroke="none"/>
<rect x="521.600" y="609" width="15.400" height="14.600" rx="1.500" fill="#0a0a0a" stroke="none"/>
<rect x="449" y="604.500" width="108.500" height="4.600" rx="2.300" stroke="none"/>
<path d="M451.300 612 L521.600 612 L521.600 616.500 L451.300 616.500 A2.250 2.250 0 0 1 451.300 612Z" stroke="none"/>
<path d="M537 612 L555.200 612 A2.250 2.250 0 0 1 555.200 616.500 L537 616.500Z" stroke="none"/>
<rect x="524.400" y="609.100" width="8.900" height="11.500" rx="1" stroke="none"/>
</g>
<g fill="#0a0a0a">
<rect x="475.800" y="572.400" width="3.600" height="23.400" rx="1.700"/><rect x="485.600" y="572.400" width="3.600" height="23.400" rx="1.700"/><rect x="495.900" y="572.400" width="3.600" height="23.400" rx="1.700"/><rect x="506.300" y="572.400" width="3.600" height="23.400" rx="1.700"/><rect x="516.600" y="572.400" width="3.600" height="23.400" rx="1.700"/><rect x="527" y="572.400" width="3.600" height="23.400" rx="1.700"/>
<rect x="475.800" y="626.300" width="3.600" height="24.300" rx="1.700"/><rect x="485.600" y="626.300" width="3.600" height="24.300" rx="1.700"/><rect x="495.900" y="626.300" width="3.600" height="24.300" rx="1.700"/><rect x="506.300" y="626.300" width="3.600" height="24.300" rx="1.700"/><rect x="516.600" y="626.300" width="3.600" height="24.300" rx="1.700"/><rect x="527" y="626.300" width="3.600" height="24.300" rx="1.700"/>
</g>
</g>
<!-- QR -->
<path d="M949.90 709.90h15.31v2.23h-15.31zM967.33 709.90h10.95v2.23h-10.95zM980.41 709.90h4.41v2.23h-4.41zM991.31 709.90h2.23v2.23h-2.23zM997.84 709.90h15.31v2.23h-15.31zM949.90 712.08h2.23v2.23h-2.23zM962.98 712.08h2.23v2.23h-2.23zM967.33 712.08h4.41v2.23h-4.41zM973.87 712.08h4.41v2.23h-4.41zM982.59 712.08h2.23v2.23h-2.23zM993.49 712.08h2.23v2.23h-2.23zM997.84 712.08h2.23v2.23h-2.23zM1010.92 712.08h2.23v2.23h-2.23zM949.90 714.26h2.23v2.23h-2.23zM954.26 714.26h6.59v2.23h-6.59zM962.98 714.26h2.23v2.23h-2.23zM971.69 714.26h2.23v2.23h-2.23zM976.05 714.26h2.23v2.23h-2.23zM986.95 714.26h4.41v2.23h-4.41zM993.49 714.26h2.23v2.23h-2.23zM997.84 714.26h2.23v2.23h-2.23zM1002.20 714.26h6.59v2.23h-6.59zM1010.92 714.26h2.23v2.23h-2.23zM949.90 716.44h2.23v2.23h-2.23zM954.26 716.44h6.59v2.23h-6.59zM962.98 716.44h2.23v2.23h-2.23zM967.33 716.44h4.41v2.23h-4.41zM976.05 716.44h10.95v2.23h-10.95zM989.13 716.44h6.59v2.23h-6.59zM997.84 716.44h2.23v2.23h-2.23zM1002.20 716.44h6.59v2.23h-6.59zM1010.92 716.44h2.23v2.23h-2.23zM949.90 718.62h2.23v2.23h-2.23zM954.26 718.62h6.59v2.23h-6.59zM962.98 718.62h2.23v2.23h-2.23zM967.33 718.62h24.02v2.23h-24.02zM997.84 718.62h2.23v2.23h-2.23zM1002.20 718.62h6.59v2.23h-6.59zM1010.92 718.62h2.23v2.23h-2.23zM949.90 720.80h2.23v2.23h-2.23zM962.98 720.80h2.23v2.23h-2.23zM971.69 720.80h2.23v2.23h-2.23zM976.05 720.80h2.23v2.23h-2.23zM986.95 720.80h6.59v2.23h-6.59zM997.84 720.80h2.23v2.23h-2.23zM1010.92 720.80h2.23v2.23h-2.23zM949.90 722.98h15.31v2.23h-15.31zM967.33 722.98h2.23v2.23h-2.23zM971.69 722.98h2.23v2.23h-2.23zM976.05 722.98h2.23v2.23h-2.23zM980.41 722.98h2.23v2.23h-2.23zM984.77 722.98h2.23v2.23h-2.23zM989.13 722.98h2.23v2.23h-2.23zM993.49 722.98h2.23v2.23h-2.23zM997.84 722.98h15.31v2.23h-15.31zM967.33 725.16h4.41v2.23h-4.41zM976.05 725.16h6.59v2.23h-6.59zM986.95 725.16h2.23v2.23h-2.23zM949.90 727.33h2.23v2.23h-2.23zM956.44 727.33h8.77v2.23h-8.77zM967.33 727.33h6.59v2.23h-6.59zM976.05 727.33h4.41v2.23h-4.41zM984.77 727.33h2.23v2.23h-2.23zM995.67 727.33h8.77v2.23h-8.77zM1006.56 727.33h4.41v2.23h-4.41zM952.08 729.51h2.23v2.23h-2.23zM960.80 729.51h2.23v2.23h-2.23zM965.16 729.51h4.41v2.23h-4.41zM980.41 729.51h2.23v2.23h-2.23zM991.31 729.51h2.23v2.23h-2.23zM995.67 729.51h2.23v2.23h-2.23zM1006.56 729.51h2.23v2.23h-2.23zM952.08 731.69h13.13v2.23h-13.13zM971.69 731.69h2.23v2.23h-2.23zM978.23 731.69h2.23v2.23h-2.23zM984.77 731.69h2.23v2.23h-2.23zM989.13 731.69h4.41v2.23h-4.41zM997.84 731.69h4.41v2.23h-4.41zM1004.38 731.69h6.59v2.23h-6.59zM949.90 733.87h2.23v2.23h-2.23zM954.26 733.87h6.59v2.23h-6.59zM965.16 733.87h2.23v2.23h-2.23zM973.87 733.87h6.59v2.23h-6.59zM982.59 733.87h6.59v2.23h-6.59zM993.49 733.87h4.41v2.23h-4.41zM1004.38 733.87h4.41v2.23h-4.41zM1010.92 733.87h2.23v2.23h-2.23zM949.90 736.05h2.23v2.23h-2.23zM958.62 736.05h2.23v2.23h-2.23zM962.98 736.05h2.23v2.23h-2.23zM967.33 736.05h4.41v2.23h-4.41zM976.05 736.05h4.41v2.23h-4.41zM982.59 736.05h15.31v2.23h-15.31zM1000.02 736.05h2.23v2.23h-2.23zM1004.38 736.05h8.77v2.23h-8.77zM949.90 738.23h2.23v2.23h-2.23zM956.44 738.23h4.41v2.23h-4.41zM967.33 738.23h4.41v2.23h-4.41zM973.87 738.23h2.23v2.23h-2.23zM982.59 738.23h2.23v2.23h-2.23zM991.31 738.23h10.95v2.23h-10.95zM1004.38 738.23h6.59v2.23h-6.59zM954.26 740.41h15.31v2.23h-15.31zM976.05 740.41h2.23v2.23h-2.23zM980.41 740.41h10.95v2.23h-10.95zM993.49 740.41h2.23v2.23h-2.23zM997.84 740.41h15.31v2.23h-15.31zM949.90 742.59h2.23v2.23h-2.23zM965.16 742.59h4.41v2.23h-4.41zM971.69 742.59h2.23v2.23h-2.23zM978.23 742.59h2.23v2.23h-2.23zM991.31 742.59h2.23v2.23h-2.23zM949.90 744.77h10.95v2.23h-10.95zM962.98 744.77h2.23v2.23h-2.23zM971.69 744.77h4.41v2.23h-4.41zM986.95 744.77h2.23v2.23h-2.23zM991.31 744.77h6.59v2.23h-6.59zM1000.02 744.77h2.23v2.23h-2.23zM1006.56 744.77h6.59v2.23h-6.59zM958.62 746.95h4.41v2.23h-4.41zM967.33 746.95h2.23v2.23h-2.23zM971.69 746.95h6.59v2.23h-6.59zM984.77 746.95h2.23v2.23h-2.23zM989.13 746.95h6.59v2.23h-6.59zM997.84 746.95h2.23v2.23h-2.23zM1004.38 746.95h4.41v2.23h-4.41zM949.90 749.13h6.59v2.23h-6.59zM958.62 749.13h2.23v2.23h-2.23zM962.98 749.13h2.23v2.23h-2.23zM969.51 749.13h2.23v2.23h-2.23zM980.41 749.13h2.23v2.23h-2.23zM984.77 749.13h19.66v2.23h-19.66zM1006.56 749.13h2.23v2.23h-2.23zM949.90 751.31h2.23v2.23h-2.23zM958.62 751.31h4.41v2.23h-4.41zM969.51 751.31h10.95v2.23h-10.95zM982.59 751.31h2.23v2.23h-2.23zM986.95 751.31h4.41v2.23h-4.41zM993.49 751.31h4.41v2.23h-4.41zM952.08 753.49h2.23v2.23h-2.23zM956.44 753.49h2.23v2.23h-2.23zM962.98 753.49h4.41v2.23h-4.41zM969.51 753.49h8.77v2.23h-8.77zM982.59 753.49h2.23v2.23h-2.23zM986.95 753.49h2.23v2.23h-2.23zM991.31 753.49h15.31v2.23h-15.31zM1010.92 753.49h2.23v2.23h-2.23zM971.69 755.67h4.41v2.23h-4.41zM978.23 755.67h8.77v2.23h-8.77zM989.13 755.67h2.23v2.23h-2.23zM993.49 755.67h2.23v2.23h-2.23zM1002.20 755.67h6.59v2.23h-6.59zM949.90 757.84h15.31v2.23h-15.31zM967.33 757.84h2.23v2.23h-2.23zM978.23 757.84h6.59v2.23h-6.59zM993.49 757.84h2.23v2.23h-2.23zM997.84 757.84h2.23v2.23h-2.23zM1002.20 757.84h2.23v2.23h-2.23zM1006.56 757.84h2.23v2.23h-2.23zM949.90 760.02h2.23v2.23h-2.23zM962.98 760.02h2.23v2.23h-2.23zM969.51 760.02h4.41v2.23h-4.41zM976.05 760.02h6.59v2.23h-6.59zM989.13 760.02h6.59v2.23h-6.59zM1002.20 760.02h4.41v2.23h-4.41zM1008.74 760.02h4.41v2.23h-4.41zM949.90 762.20h2.23v2.23h-2.23zM954.26 762.20h6.59v2.23h-6.59zM962.98 762.20h2.23v2.23h-2.23zM973.87 762.20h2.23v2.23h-2.23zM978.23 762.20h2.23v2.23h-2.23zM982.59 762.20h4.41v2.23h-4.41zM989.13 762.20h2.23v2.23h-2.23zM993.49 762.20h10.95v2.23h-10.95zM1006.56 762.20h6.59v2.23h-6.59zM949.90 764.38h2.23v2.23h-2.23zM954.26 764.38h6.59v2.23h-6.59zM962.98 764.38h2.23v2.23h-2.23zM971.69 764.38h4.41v2.23h-4.41zM980.41 764.38h2.23v2.23h-2.23zM984.77 764.38h15.31v2.23h-15.31zM1002.20 764.38h2.23v2.23h-2.23zM1006.56 764.38h4.41v2.23h-4.41zM949.90 766.56h2.23v2.23h-2.23zM954.26 766.56h6.59v2.23h-6.59zM962.98 766.56h2.23v2.23h-2.23zM969.51 766.56h4.41v2.23h-4.41zM978.23 766.56h6.59v2.23h-6.59zM986.95 766.56h2.23v2.23h-2.23zM993.49 766.56h4.41v2.23h-4.41zM1002.20 766.56h2.23v2.23h-2.23zM1006.56 766.56h6.59v2.23h-6.59zM949.90 768.74h2.23v2.23h-2.23zM962.98 768.74h2.23v2.23h-2.23zM969.51 768.74h8.77v2.23h-8.77zM980.41 768.74h2.23v2.23h-2.23zM993.49 768.74h6.59v2.23h-6.59zM1002.20 768.74h4.41v2.23h-4.41zM1008.74 768.74h4.41v2.23h-4.41zM949.90 770.92h15.31v2.23h-15.31zM967.33 770.92h4.41v2.23h-4.41zM973.87 770.92h6.59v2.23h-6.59zM991.31 770.92h2.23v2.23h-2.23zM995.67 770.92h2.23v2.23h-2.23zM1000.02 770.92h2.23v2.23h-2.23zM1004.38 770.92h8.77v2.23h-8.77z" fill="#0b0b0b"/>
<!-- ===== selection boxes ===== -->
<g fill="none" stroke="#3f8fd4" stroke-width="1.300">
<rect x="442.100" y="557.400" width="121.200" height="106.700"/>
<rect x="1012.700" y="355" width="136" height="151.400"/>
<g fill="#dcdcdc" stroke-width="1.200">
<rect x="438.300" y="553.600" width="7.600" height="7.600" rx="1.300"/><rect x="559.500" y="553.600" width="7.600" height="7.600" rx="1.300"/><rect x="438.300" y="660.300" width="7.600" height="7.600" rx="1.300"/><rect x="559.500" y="660.300" width="7.600" height="7.600" rx="1.300"/>
<rect x="1008.900" y="351.200" width="7.600" height="7.600" rx="1.300"/><rect x="1144.900" y="351.200" width="7.600" height="7.600" rx="1.300"/><rect x="1008.900" y="502.600" width="7.600" height="7.600" rx="1.300"/><rect x="1144.900" y="502.600" width="7.600" height="7.600" rx="1.300"/>
</g>
</g>
<!-- ===== cursors ===== -->
<path d="M1149.400 507.500 L1168.400 516.200 L1159.300 518.600 L1156.400 526Z" fill="#9a2fe6" stroke="#e9d5fb" stroke-width=".8"/>
<rect x="1162.500" y="521.600" width="37" height="12" rx="2.500" fill="#9a2fe6"/>
<path d="M520.400 685.700 L540.100 694.300 L530.800 697 L527.900 705.800Z" fill="#2f9be8" stroke="#d5ecfb" stroke-width=".8"/>
<rect x="533.800" y="700" width="35" height="12.300" rx="2.500" fill="#2f9be8"/>
<path d="M730.400 596.300 L746.800 604.500 L739.200 606.300 L736.300 614Z" fill="#3fc43f"/>
<rect x="742.900" y="610" width="41.100" height="12.200" rx="2.500" fill="#45c545"/>
<rect x="874.500" y="673.500" width="1.300" height="10.500" fill="#f08a33"/>
<rect x="878.200" y="686" width="49.300" height="11" rx="2.500" fill="#f08a33"/>
<g font-family="'Liberation Sans',sans-serif" font-weight="bold" font-size="8.800" fill="#fff">
<text x="1165.800" y="530.800" textLength="30.500" lengthAdjust="spacingAndGlyphs">Jessica</text>
<text x="537" y="709.400" textLength="28.500" lengthAdjust="spacingAndGlyphs">James</text>
<text x="746" y="619.300" textLength="35" lengthAdjust="spacingAndGlyphs">Oliver S</text>
<text x="881.200" y="694.700" textLength="43.500" lengthAdjust="spacingAndGlyphs">Zoe (You)</text>
</g>
<!-- ===== poster headings ===== -->
<g font-family="'Liberation Sans',sans-serif" font-weight="bold" fill="#0e0e0e" stroke="#0e0e0e" stroke-linejoin="round" paint-order="stroke">
<text x="757.400" y="293.200" font-size="60.300" stroke-width="3.400" textLength="264.800" lengthAdjust="spacingAndGlyphs">SAY NO!</text>
<text x="759.200" y="334.500" font-size="35.200" stroke-width="2.100" textLength="261.500" lengthAdjust="spacingAndGlyphs">TO PLASTICS</text>
<text x="629.800" y="729.700" font-size="22.600" stroke-width="1.600" textLength="67.500" lengthAdjust="spacingAndGlyphs">#END</text>
<text x="631" y="750.200" font-size="22.600" stroke-width="1.600" textLength="100.500" lengthAdjust="spacingAndGlyphs" fill="#808080" stroke="#808080">PLASTIC</text>
<text x="630.300" y="770.800" font-size="22.600" stroke-width="1.600" textLength="140" lengthAdjust="spacingAndGlyphs">POLLUTION</text>
</g>
</svg>

<div id="para" class="abs" style="left:631.8px;top:637.1px;width:384.8px;font-size:10.4px;line-height:9.3px;color:#141414">
<div class="jl">Plastic is full of toxic chemicals and it is everywhere. It is poisoning our health,</div>
<div class="jl">harming communities, and destroying our environment and wildlife. Micro</div>
<div class="jl">plastics are in our bodies, from the food we eat, the water we drink, and even</div>
<div class="jl">the air we breathe. And because over 99% of plastic is made from fossil fuels,</div>
<div class="jl" style="width:239.3px" id="lastl">and we keep making more, it is a significant driver</div>
</div>

<div class="abs ex" id="zoomc" style="left:348.8px;top:881px;width:123px;height:33.600px"><span style="position:absolute;left:0;width:123px;top:0;line-height:36.800px;font-size:12.300px;color:#e3e3e8;text-align:center;display:inline-block;transform:scaleX(.92);-webkit-text-stroke:.25px #e3e3e8">100%</span></div>
<div class="abs ex" id="undo" style="left:480.5px;top:881px;width:67px;height:33.5px"></div>
<svg class="abs" style="left:0;top:870px" width="600" height="60" viewBox="0 870 600 60" fill="none" stroke="#e3e3e8" stroke-width="1.300" stroke-linecap="round" stroke-linejoin="round">
<path d="M361.200 898.100 H369.500 M450.200 898.100 H459.500 M454.850 893.500 V902.800"/>
<path d="M495.600 894 L492.700 896.900 L495.600 899.800 M492.900 896.900 H500 C504.300 896.900 504.300 902 500.500 902 H499.500"/>
<path d="M532.300 894 L535.200 896.900 L532.300 899.800 M535 896.900 H528 C523.700 896.900 523.700 902 527.500 902 H528.500" stroke="#55555d"/>
</svg>
<!-- BOTTOM -->

<div id="gnp" class="abs"></div>
<div class="abs gb" style="left:33px"></div>
<div class="abs gb" style="left:361px"></div>
<div class="abs gb" style="left:689px;background:#303030"></div>
<div class="abs gb" style="left:1018px"></div>
<svg class="abs" style="left:0;top:940px" width="1370" height="116" viewBox="0 940 1370 116" font-family="'Liberation Sans',sans-serif" font-size="14.700" fill="#fff" stroke="#fff" stroke-width=".45" paint-order="stroke">
<text x="19.400" y="966.300" font-size="11.300" fill="#6e6e6e" stroke="none" textLength="119" lengthAdjust="spacing">GROUP NAVIGATION</text>
<text x="114.600" y="1023.100" textLength="144.500" lengthAdjust="spacing">#2: ENVIRONMENT</text>
<text x="396.100" y="1023.100" textLength="237.300" lengthAdjust="spacing">#3: GLOBAL PLASTICS TREATY</text>
<text x="745.700" y="1023.100" textLength="196.700" lengthAdjust="spacing" fill="#747474" stroke="#747474" stroke-width=".3">GROUP COLLABORATION</text>
<text x="1072.700" y="1023.100" textLength="198.600" lengthAdjust="spacing">FINISHING: TAKE ACTION!</text>
</svg>
</div>
</body>
</html>
